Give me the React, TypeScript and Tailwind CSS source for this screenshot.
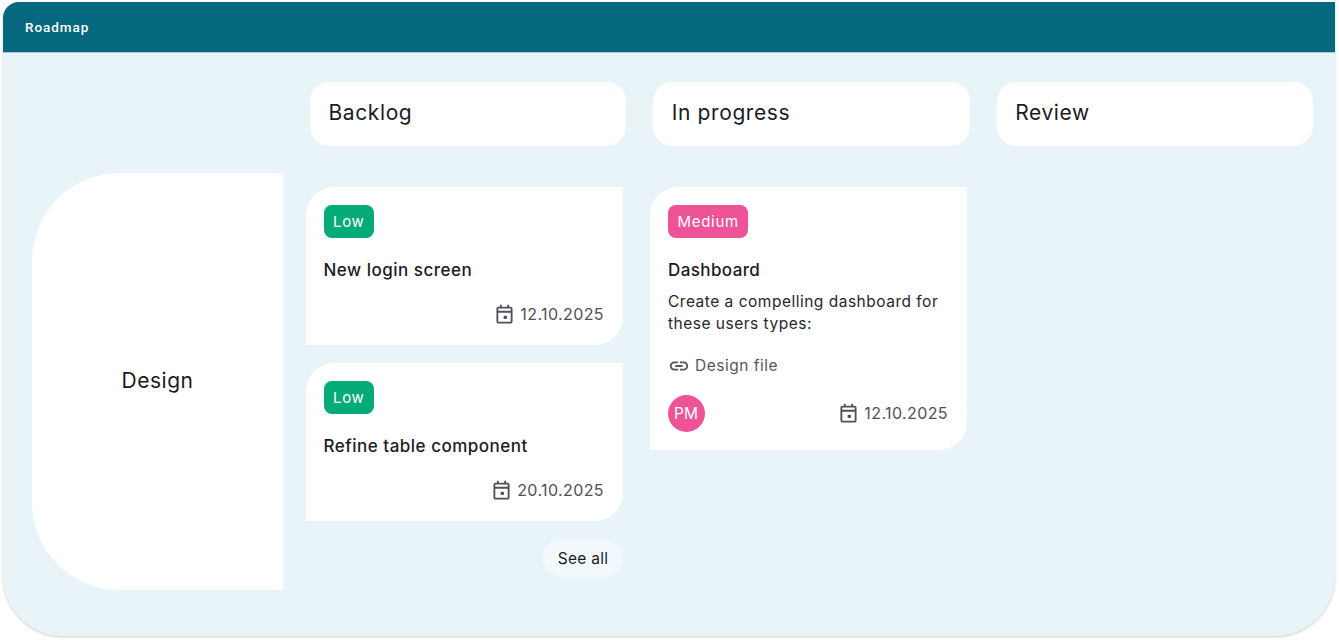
import { ReactNode } from 'react'

function CalendarIcon() {
  return (
    <svg width="23" height="23" viewBox="0 0 20 20" fill="currentColor" className="shrink-0">
      <path d="M6 1.5h1.6v1.7h4.8V1.5H14v1.7h1.2c1 0 1.8.8 1.8 1.8v11c0 1-.8 1.8-1.8 1.8H4.8c-1 0-1.8-.8-1.8-1.8V5c0-1 .8-1.8 1.8-1.8H6V1.5zM4.6 8.4v7.6c0 .2.1.3.2.3h10.4c.1 0 .2-.1.2-.3V8.4H4.6zm0-1.6h10.8V5c0-.1-.1-.2-.2-.2H4.8c-.1 0-.2.1-.2.2v1.8z" />
      <rect x="9.2" y="11" width="3" height="3" rx="1" />
    </svg>
  )
}

function LinkIcon() {
  return (
    <svg width="22" height="22" viewBox="0 0 24 24" fill="currentColor" className="shrink-0">
      <path d="M17 7h-4v2h4c1.65 0 3 1.35 3 3s-1.35 3-3 3h-4v2h4c2.76 0 5-2.24 5-5s-2.24-5-5-5zm-6 8H7c-1.65 0-3-1.35-3-3s1.35-3 3-3h4V7H7c-2.76 0-5 2.24-5 5s2.24 5 5 5h4v-2zm-3-4h8v2H8z" />
    </svg>
  )
}

function DateLabel({ date }: { date: string }) {
  return (
    <div className="flex items-center gap-[4px] text-[16px] leading-6 tracking-[0.4px] text-[#4f5157]">
      <CalendarIcon />
      <span>{date}</span>
    </div>
  )
}

function Badge({ color, children }: { color: string; children: ReactNode }) {
  return (
    <span className={`inline-flex h-[33px] items-center rounded-lg pt-[2px] pr-[9px] pl-[9.5px] text-[15px] tracking-[0.7px] text-white ${color}`}>
      {children}
    </span>
  )
}

function ColumnHeader({ title }: { title: string }) {
  return (
    <div className="flex h-16 items-center rounded-[20px] bg-white pb-[3px] pl-[18.5px] text-[21px] tracking-[0.6px] text-[#1a1c1e]">
      {title}
    </div>
  )
}

function SimpleCard({ title, date }: { title: string; date: string }) {
  return (
    <div className="flex h-[158px] flex-col rounded-tl-[28px] rounded-br-[28px] bg-white pt-[18px] pl-[17.5px]">
      <div><Badge color="bg-[#04ab77]">Low</Badge></div>
      <div className="mt-5 text-[17px] leading-6 font-medium tracking-[0.5px] text-[#1a1c1e]">{title}</div>
      <div className="mt-5 flex justify-end pr-[19px]">
        <DateLabel date={date} />
      </div>
    </div>
  )
}

export default function App() {
  return (
    <div className="h-[641px] w-[1339px] overflow-hidden bg-white pt-[2px] pl-[3px] font-['Inter',sans-serif] antialiased">
      <div className="h-[634px] w-[1332px] overflow-hidden rounded-tl-2xl rounded-b-[60px] bg-[#e9f4f9] shadow-[0_1px_3px_rgba(0,0,0,0.2)]">
        {/* Header */}
        <div className="flex h-[51px] items-center border-b border-[#a9cbd5] bg-[#05687e] pt-[1px] pl-[22px] font-['Roboto',sans-serif] text-[13.5px] font-medium tracking-[0.95px] text-white">
          Roadmap
        </div>

        {/* Column titles */}
        <div className="mt-[29px] ml-[307px] grid w-[1003px] grid-cols-3 gap-[27px]">
          <ColumnHeader title="Backlog" />
          <ColumnHeader title="In progress" />
          <ColumnHeader title="Review" />
        </div>

        {/* Swimlane */}
        <div className="mt-[27px] ml-[29px] flex items-start">
          <div className="flex h-[417px] w-[251px] items-center justify-center rounded-l-[88px] bg-white pb-[1px] text-[21px] tracking-[0.5px] text-[#1a1c1e]">
            Design
          </div>

          <div className="mt-[14px] ml-[23px] flex gap-[27px]">
            <div className="flex w-[317px] flex-col gap-[18px]">
              <SimpleCard title="New login screen" date="12.10.2025" />
              <SimpleCard title="Refine table component" date="20.10.2025" />
              <div className="flex justify-end">
                <button className="h-[38px] w-[80px] rounded-[19px] bg-[#f2f9fc] pt-[1px] text-[15.5px] tracking-[0.3px] text-[#1a1c1e]">
                  See all
                </button>
              </div>
            </div>

            <div className="h-[263px] w-[317px] rounded-tl-[28px] rounded-br-[28px] bg-white pt-[18px] pl-[18px]">
              <Badge color="bg-[#ef5397]">Medium</Badge>
              <div className="mt-[20px] text-[17px] leading-6 font-medium tracking-[0.4px] text-[#1a1c1e]">Dashboard</div>
              <p className="mt-[9px] text-[15.5px] leading-[22px] tracking-[0.5px] text-[#26282c]">
                Create a compelling dashboard for
                <br />
                these users types:
              </p>
              <div className="mt-[19px] flex items-center gap-[5px] text-[15.5px] leading-6 tracking-[0.5px] text-[#55575c]">
                <LinkIcon />
                <span>Design file</span>
              </div>
              <div className="mt-[17px] flex items-center justify-between pr-[19px]">
                <div className="flex h-[37px] w-[37px] items-center justify-center rounded-full bg-[#ef5397] pr-[1px] text-[15.5px] text-white">
                  PM
                </div>
                <div className="pb-[1px]">
                  <DateLabel date="12.10.2025" />
                </div>
              </div>
            </div>
          </div>
        </div>
      </div>
    </div>
  )
}
